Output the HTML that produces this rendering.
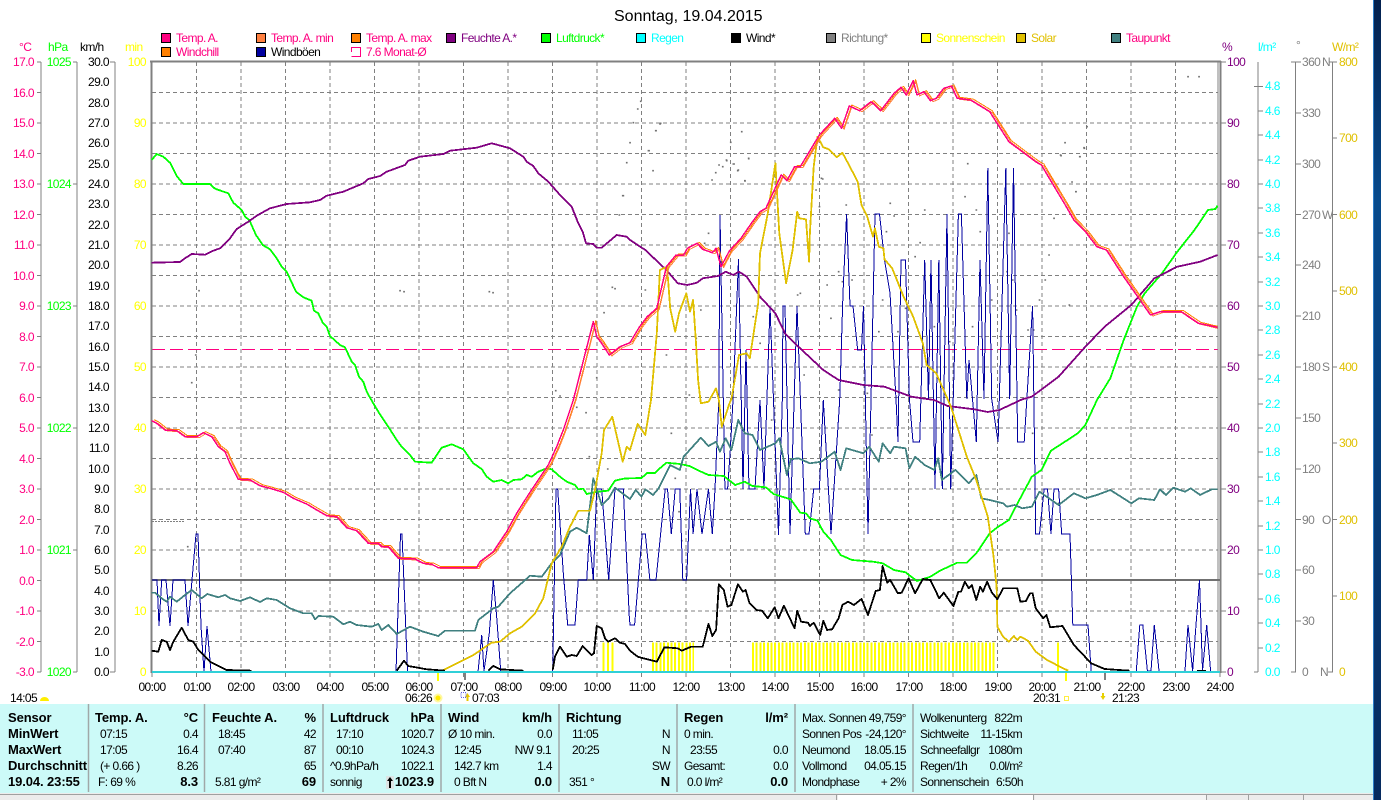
<!DOCTYPE html>
<html><head><meta charset="utf-8"><title>Sonntag, 19.04.2015</title>
<style>
html,body{margin:0;padding:0;background:#fff;overflow:hidden}
svg{display:block;position:absolute;left:0;top:0}
text{font-family:"Liberation Sans",sans-serif;font-size:12px;letter-spacing:-.6px}
.b text{font-size:13px;font-weight:bold;letter-spacing:-.1px}
</style></head><body>
<svg width="1381" height="800" viewBox="0 0 1381 800" xmlns="http://www.w3.org/2000/svg">
<defs>
<linearGradient id="dk" x1="0" y1="0" x2="0" y2="1"><stop offset="0" stop-color="#03204e"/><stop offset=".25" stop-color="#064a8c"/><stop offset=".6" stop-color="#053c78"/><stop offset="1" stop-color="#062a5e"/></linearGradient>
</defs>
<rect width="1381" height="800" fill="#fff"/>
<rect x="1373" y="0" width="8" height="800" fill="url(#dk)"/>
<rect x="1373" y="0" width="1" height="800" fill="#2a7cc8"/>
<text x="614" y="21" style="font-size:16px;letter-spacing:0" fill="#000">Sonntag, 19.04.2015</text>

<!-- legend -->
<g stroke="#000" stroke-width="1" shape-rendering="crispEdges">
<rect x="161.5" y="33.5" width="9" height="9" fill="#ff0080"/>
<rect x="256.5" y="33.5" width="9" height="9" fill="#ff8040"/>
<rect x="351.5" y="33.5" width="9" height="9" fill="#ff8000"/>
<rect x="446.5" y="33.5" width="9" height="9" fill="#800080"/>
<rect x="541.5" y="33.5" width="9" height="9" fill="#00ff00"/>
<rect x="636.5" y="33.5" width="9" height="9" fill="#00ffff"/>
<rect x="731.5" y="33.5" width="9" height="9" fill="#000"/>
<rect x="826.5" y="33.5" width="9" height="9" fill="#808080"/>
<rect x="921.5" y="33.5" width="9" height="9" fill="#ffff00"/>
<rect x="1016.5" y="33.5" width="9" height="9" fill="#e0c000"/>
<rect x="1111.5" y="33.5" width="9" height="9" fill="#408080"/>
<rect x="161.5" y="47.5" width="9" height="9" fill="#ff8000"/>
<rect x="256.5" y="47.5" width="9" height="9" fill="#0000a0"/>
</g>
<path d="M351.5 52V47.500H360.500V56.500H351.500" fill="none" stroke="#ff0080" shape-rendering="crispEdges"/>
<g fill="#ff0080">
<text x="176" y="42">Temp. A.</text><text x="271" y="42">Temp. A. min</text><text x="366" y="42">Temp. A. max</text>
<text x="176" y="56">Windchill</text><text x="366" y="56">7.6 Monat-Ø</text><text x="1126" y="42">Taupunkt</text>
</g>
<text x="271" y="56" fill="#000">Windböen</text>
<text x="461" y="42" fill="#800080">Feuchte A.*</text>
<text x="556" y="42" fill="#00ff00">Luftdruck*</text>
<text x="651" y="42" fill="#00ffff">Regen</text>
<text x="746" y="42" fill="#000">Wind*</text>
<text x="841" y="42" fill="#808080">Richtung*</text>
<text x="936" y="42" fill="#ffff00">Sonnenschein</text>
<text x="1031" y="42" fill="#e0c000">Solar</text>

<!-- axis headers -->
<text x="19" y="51" fill="#ff0080">°C</text>
<text x="48" y="51" fill="#00ff00">hPa</text>
<text x="80" y="51" fill="#000">km/h</text>
<text x="125" y="51" fill="#ffff00">min</text>
<text x="1222" y="51" fill="#800080">%</text>
<text x="1258" y="51" fill="#00ffff">l/m²</text>
<text x="1296" y="49" fill="#808080">°</text>
<text x="1332" y="51" fill="#e0c000">W/m²</text>

<!-- left axes -->
<path d="M41 62V672M77 62V672M115 62V672M37 62H41M37 92.500H41M37 123H41M37 153.500H41M37 184H41M37 214.500H41M37 245H41M37 275.500H41M37 306H41M37 336.500H41M37 367H41M37 397.500H41M37 428H41M37 458.500H41M37 489H41M37 519.500H41M37 550H41M37 580.500H41M37 611H41M37 641.500H41M37 672H41M73 62H77M73 184H77M73 306H77M73 428H77M73 550H77M73 672H77M110 62H115M110 672H115M1221 62H1226M1221 123H1226M1221 184H1226M1221 245H1226M1221 306H1226M1221 367H1226M1221 428H1226M1221 489H1226M1221 550H1226M1221 611H1226M1221 672H1226M1258 62V672M1295.500 62V672M1332.500 62V672M1254 86.400H1263M1258 111H1263M1258 135H1263M1258 160H1263M1258 184H1263M1258 208H1263M1258 233H1263M1258 257H1263M1258 282H1263M1258 306H1263M1258 330H1263M1258 355H1263M1258 379H1263M1258 404H1263M1258 428H1263M1258 452H1263M1258 477H1263M1258 501H1263M1258 526H1263M1258 550H1263M1258 574H1263M1258 599H1263M1258 623H1263M1258 648H1263M1254 672H1258M1291 62H1301M1296 113H1301M1296 164H1301M1296 214.500H1301M1296 265H1301M1296 316H1301M1296 367H1301M1296 418H1301M1296 469H1301M1296 519.500H1301M1296 570H1301M1296 621H1301M1291 672H1296M1329 62H1337M1333 138H1337M1333 214.500H1337M1333 291H1337M1333 367H1337M1333 443H1337M1333 519.500H1337M1333 596H1337M1328 672H1333" fill="none" stroke="#808080" shape-rendering="crispEdges"/>
<g fill="#ff0080" text-anchor="end">
<text x="34" y="66">17.0</text><text x="34" y="97">16.0</text><text x="34" y="127">15.0</text><text x="34" y="158">14.0</text><text x="34" y="188">13.0</text><text x="34" y="219">12.0</text><text x="34" y="249">11.0</text><text x="34" y="280">10.0</text><text x="34" y="310">9.0</text><text x="34" y="341">8.0</text><text x="34" y="371">7.0</text><text x="34" y="402">6.0</text><text x="34" y="432">5.0</text><text x="34" y="463">4.0</text><text x="34" y="493">3.0</text><text x="34" y="524">2.0</text><text x="34" y="554">1.0</text><text x="34" y="585">0.0</text><text x="34" y="615">-1.0</text><text x="34" y="646">-2.0</text><text x="34" y="676">-3.0</text>
</g>
<g fill="#00ff00" text-anchor="end">
<text x="71" y="66">1025</text><text x="71" y="188">1024</text><text x="71" y="310">1023</text><text x="71" y="432">1022</text><text x="71" y="554">1021</text><text x="71" y="676">1020</text>
</g>
<g fill="#000" text-anchor="end">
<text x="109" y="66">30.0</text><text x="109" y="86">29.0</text><text x="109" y="107">28.0</text><text x="109" y="127">27.0</text><text x="109" y="147">26.0</text><text x="109" y="168">25.0</text><text x="109" y="188">24.0</text><text x="109" y="208">23.0</text><text x="109" y="229">22.0</text><text x="109" y="249">21.0</text><text x="109" y="269">20.0</text><text x="109" y="290">19.0</text><text x="109" y="310">18.0</text><text x="109" y="330">17.0</text><text x="109" y="351">16.0</text><text x="109" y="371">15.0</text><text x="109" y="391">14.0</text><text x="109" y="412">13.0</text><text x="109" y="432">12.0</text><text x="109" y="452">11.0</text><text x="109" y="473">10.0</text><text x="109" y="493">9.0</text><text x="109" y="513">8.0</text><text x="109" y="534">7.0</text><text x="109" y="554">6.0</text><text x="109" y="574">5.0</text><text x="109" y="595">4.0</text><text x="109" y="615">3.0</text><text x="109" y="635">2.0</text><text x="109" y="656">1.0</text><text x="109" y="676">0.0</text>
</g>
<g fill="#ffff00" text-anchor="end">
<text x="146" y="66">100</text><text x="146" y="127">90</text><text x="146" y="188">80</text><text x="146" y="249">70</text><text x="146" y="310">60</text><text x="146" y="371">50</text><text x="146" y="432">40</text><text x="146" y="493">30</text><text x="146" y="554">20</text><text x="146" y="615">10</text><text x="146" y="676">0</text>
</g>
<g fill="#800080">
<text x="1227" y="66">100</text><text x="1227" y="127">90</text><text x="1227" y="188">80</text><text x="1227" y="249">70</text><text x="1227" y="310">60</text><text x="1227" y="371">50</text><text x="1227" y="432">40</text><text x="1227" y="493">30</text><text x="1227" y="554">20</text><text x="1227" y="615">10</text><text x="1227" y="676">0</text>
</g>
<g fill="#00ffff">
<text x="1265" y="90">4.8</text><text x="1265" y="115">4.6</text><text x="1265" y="139">4.4</text><text x="1265" y="164">4.2</text><text x="1265" y="188">4.0</text><text x="1265" y="212">3.8</text><text x="1265" y="237">3.6</text><text x="1265" y="261">3.4</text><text x="1265" y="286">3.2</text><text x="1265" y="310">3.0</text><text x="1265" y="334">2.8</text><text x="1265" y="359">2.6</text><text x="1265" y="383">2.4</text><text x="1265" y="408">2.2</text><text x="1265" y="432">2.0</text><text x="1265" y="456">1.8</text><text x="1265" y="481">1.6</text><text x="1265" y="505">1.4</text><text x="1265" y="530">1.2</text><text x="1265" y="554">1.0</text><text x="1265" y="578">0.8</text><text x="1265" y="603">0.6</text><text x="1265" y="627">0.4</text><text x="1265" y="652">0.2</text><text x="1265" y="676">0.0</text>
</g>
<g fill="#808080">
<text x="1302" y="66">360</text><text x="1322" y="66">N</text><text x="1302" y="117">330</text><text x="1302" y="168">300</text><text x="1302" y="219">270</text><text x="1322" y="219">W</text><text x="1302" y="269">240</text><text x="1302" y="320">210</text><text x="1302" y="371">180</text><text x="1322" y="371">S</text><text x="1302" y="422">150</text><text x="1302" y="473">120</text><text x="1302" y="524">90</text><text x="1322" y="524">O</text><text x="1302" y="574">60</text><text x="1302" y="625">30</text><text x="1302" y="676">0</text><text x="1320" y="676">N</text>
</g>
<g fill="#e0c000">
<text x="1339" y="66">800</text><text x="1339" y="142">700</text><text x="1339" y="219">600</text><text x="1339" y="295">500</text><text x="1339" y="371">400</text><text x="1339" y="447">300</text><text x="1339" y="524">200</text><text x="1339" y="600">100</text><text x="1339" y="676">0</text>
</g>

<!-- grid -->
<path d="M196.500 62V672M241 62V672M285.500 62V672M330 62V672M374.500 62V672M419 62V672M463.500 62V672M508 62V672M552.500 62V672M597 62V672M641.500 62V672M686 62V672M730.500 62V672M775 62V672M819.500 62V672M864 62V672M908.500 62V672M953 62V672M997.500 62V672M1042 62V672M1086.500 62V672M1131 62V672M1175.500 62V672M152 92.500H1218M152 123H1218M152 153.500H1218M152 184H1218M152 214.500H1218M152 245H1218M152 275.500H1218M152 306H1218M152 336.500H1218M152 367H1218M152 397.500H1218M152 428H1218M152 458.500H1218M152 489H1218M152 519.500H1218M152 550H1218M152 611H1218M152 641.500H1218" fill="none" stroke="#808080" stroke-dasharray="4 3" shape-rendering="crispEdges"/>
<path d="M152 349.500H1218" fill="none" stroke="#ff0080" stroke-dasharray="13 5" shape-rendering="crispEdges"/>
<path d="M152 521.500H185" fill="none" stroke="#808080" stroke-dasharray="2 1" shape-rendering="crispEdges"/>

<!-- direction dots -->
<path fill="none" stroke="#707070" stroke-width="1.600" stroke-linecap="square" d="M199 290.700h.1M195.700 355h.1M191.700 382.700h.1M400 290.700h.1M404 291.700h.1M489.300 291.700h.1M493 292.700h.1M555.700 390.700h.1M560 396h.1M626.700 162.700h.1M630 142.700h.1M623.300 195.700h.1M619.300 215h.1M612.300 287.300h.1M615 288.700h.1M604 312.700h.1M596.700 377.700h.1M187.700 546.700h.1M576.700 407.300h.1M586 412.700h.1M589.300 456.700h.1M607.700 469h.1M637.700 109h.1M640.700 101.300h.1M633.300 122.700h.1M660 124h.1M655.700 130.700h.1M649 150.700h.1M653 170.700h.1M622.700 195.700h.1M719 165h.1M722.700 166.700h.1M726.700 160.700h.1M715.700 172.700h.1M712 180h.1M734 164h.1M737.700 170.700h.1M745 181h.1M748.700 158.700h.1M741.700 131.700h.1M730.700 142.300h.1M822.700 179h.1M816 190h.1M967.700 163.700h.1M965 196.700h.1M1188 76.700h.1M1199 76.700h.1M1087 126.700h.1M1065 142.700h.1M1084 147.700h.1M1061 155.700h.1M1080 156.700h.1M1072 182h.1M1076 191.700h.1M976.300 210h.1M980.200 231.700h.1M920.100 242.700h.1M915.100 256.700h.1M924.700 210h.1M890.200 203.300h.1M894.100 216h.1M886.400 231.700h.1M846.200 205h.1M821.400 178.300h.1M819.400 206.700h.1M838.600 271.700h.1M842.400 281.700h.1M827.100 285h.1M852 280h.1M797.600 295h.1M800.300 293.300h.1M830.900 318.300h.1M882.600 300h.1M905.500 308.300h.1M878.800 331.700h.1M897.900 331.700h.1M934.300 326.700h.1M949.600 341.700h.1M972.500 326.700h.1M991.700 300h.1M1016.500 310h.1M1028 330h.1M1033.700 330h.1M1039.500 300h.1M1045.200 280h.1M1012.700 280h.1M1007 271.700h.1M1008.900 233.300h.1M1049 255h.1M1054 218.300h.1M1056.700 186.700h.1M1075.800 191.700h.1M1060.500 155h.1M1079.700 156.700h.1M1084.300 148.300h.1M1069.300 305h.1M838.600 390h.1M867.300 393.300h.1M804.100 375h.1M769.700 323.300h.1M760.100 343.300h.1M753.200 316.700h.1M666.400 355h.1M645.300 290h.1M700.800 310h.1M689.300 395h.1M696.200 338.300h.1M708.500 233.300h.1M704.600 243.300h.1M744.800 180.700h.1M738.300 170h.1M733.300 164h.1M726.400 160h.1M748.600 158.300h.1M653 170.700h.1M656 130.700h.1M660.600 123.300h.1M648.400 150.700h.1M671.300 433.300h.1M675.200 478.300h.1M679 511.700h.1M681.700 540.700h.1M693 525h.1M771.600 420h.1M871.900 435h.1M1032.600 433.300h.1M1058.600 503.300h.1"/>

<!-- sunshine bars -->
<g stroke="#ffff00" stroke-width="29.500" fill="none" shape-rendering="crispEdges">
<path d="M602.500 657H614" stroke-dasharray="2 2.500"/>
<path d="M652 657H694" stroke-dasharray="2 1.700"/>
<path d="M752 657H996" stroke-dasharray="2 1.700"/>
<path d="M1057 657H1059"/>
</g>

<!-- frame -->
<path d="M1218 62V672" fill="none" stroke="#808080" stroke-width="1" shape-rendering="crispEdges"/>
<path d="M150 61.500H1221M151.500 61V673M1220.500 61V673" fill="none" stroke="#808080" stroke-width="2" shape-rendering="crispEdges"/>
<path d="M152 580H1220" fill="none" stroke="#707070" stroke-width="2" shape-rendering="crispEdges"/>

<!-- gusts -->
<g fill="none" stroke="#0000a0" stroke-width="1" stroke-linejoin="miter" shape-rendering="crispEdges">
<polyline points="152,580 157,580 159,626 161.700,580 166,580 170,626 173,580 185,580 188,626 192,580 196,534 198,534 201,626 204,672 207,626 211,672"/>
<polyline points="396,672 400.500,534 402,534 406,633 407.500,671"/>
<polyline points="478,672 481.700,635 484,671 489.300,633 493.300,580 496.700,617 500.700,671"/>
<polyline points="552.700,671 556,489 557.700,489 563.300,573 567.700,625 575,625 578.300,580 586.700,580 589.300,535 593.300,580 596.700,489 601.700,489 608.700,580 615,489 623.300,489 629.300,617 630,625 634.600,625 638.400,580 642.200,534 645.300,534 649.900,580 656,580 660.600,534 665.200,489 667.500,489 671.300,534 675.200,489 679.800,489 682.800,580 686.600,580 690.500,489 693.100,534 697,489 702,534 708.500,489 712.300,534 715,489 718.800,400 720,215 724.900,489 727.600,489 730.300,450 733,400 738.500,259 743,489 746,350 749,489 755,489 760,400 764,489 770,306 778.500,535 782.300,400 783,306 785,306 790,534 797,306 805.300,534 809,534 813.700,489 819.400,489 823.300,400 831,534 839.700,400 843,293 846.600,214 850,306 853,306 857.700,350 861.500,350 863.500,306 868,534 871,400 875,214 879.500,214 884.500,260 890,293 896,399 898,442 901,260 905.500,260 909.400,399 913,442 919.700,442 924.700,260 928.500,399 931,260 935,489 938.800,260 942.300,489 947,214 950.700,489 958.400,214 961.400,214 966.800,399 969,360 972.500,399 976.300,442 980,260 984,399 987.800,168 991.700,399 998.100,442 1005.800,168 1009.700,399 1013.500,168 1017.700,442 1024.200,442 1032.600,306 1035.700,534 1039.500,534 1044.100,489 1047.500,489 1051,534 1054,489 1058.600,489 1061.700,534 1070,534 1072.800,625 1088,625 1091.200,671"/>
<polyline points="1136.300,671 1139.800,625 1142.800,625 1147.400,671 1151,671 1154.300,625 1159,671"/>
<polyline points="1185,671 1188,625 1192.600,671 1196,625 1199.500,580 1202.500,671 1206.700,625 1210.600,671"/>
</g>

<g fill="none" stroke-width="1.800" stroke-linejoin="round" shape-rendering="crispEdges">
<!-- Luftdruck -->
<polyline stroke="#00ff00" points="151.700,160 156.700,154 163.300,156.700 170,162.700 176.700,176 183.300,184 210,184 215,188.700 228.300,193.300 233.300,202.700 241.700,210 245,216.700 249.300,220 256,235 262.700,245 270,249.300 276.700,258.300 281.700,266.700 286.700,271.700 296,291.700 303.300,297.300 311.700,300.700 314,310.700 318.300,313.300 322.700,322.700 326.700,326.700 330,336 340,345 345,347.300 351.700,361.700 355,365 359,376.700 363.300,381.700 366.700,391.700 373.300,403.300 378.300,411.700 388.300,426.700 396.700,440 401.700,446.700 410,455 415,461.700 431.700,462.700 441.700,447.700 451.700,444.300 463.300,449.300 473.300,463.300 481.700,469 486.700,476.700 493.300,481.700 501.700,480 508.300,483.300 513.300,480 521.700,479.300 526.700,475 531.700,476.700 538.300,471.700 546.700,468.300 551.700,469.300 560,476.700 566.700,481.700 575,485 578.300,489.300 583.300,488.700 586.700,494 596.700,491.700 608.300,490.700 615,480.700 623.300,478.700 630,478.300 641.500,478 647.200,473 655,473 658.700,469.300 666.400,462.700 679.800,464 689.300,466 698.900,470.700 708.500,475 723.800,476 735.200,485 744.800,481.700 752.500,486 765.900,487.300 773.500,494 790.700,499.300 800.300,512.700 806,513.300 809.900,518.300 817.500,520.700 823.300,531.700 830.900,540 840.500,555 852,560 873,561.700 882.600,563.300 894,570 905.500,572.300 917,581 930.400,576.700 940,570.700 957.200,562.700 966.800,562.700 976.300,553.300 989.700,533.300 997.400,527.300 1008.900,520 1018.400,501.700 1031.800,476.700 1041.400,470 1051,450.700 1062.500,443.300 1077.800,433.300 1085.400,425 1097,400 1110.300,378.300 1123.700,340 1137,306.700 1144.700,293.300 1162,273.300 1177.300,251.700 1194.500,230 1207.900,210 1215.500,209 1217.500,205.700"/>
<!-- Taupunkt -->
<polyline stroke="#408080" points="151.700,592.700 155,592.700 161.700,598.300 166.700,601.700 170,596.700 176.700,601.700 185,595 191.700,590 201.700,598.300 207.300,594 218.300,597.300 225,595 230,598.300 240,601 250,597.300 260,602 266.700,598.300 276.700,600 290,608.300 303.300,613.300 311.700,613.300 315,619.300 318.300,616 333.300,616.700 343.300,624.300 350,621.700 356.700,625 371.700,626.700 378.300,624 381.700,630 388.300,625 396.700,634 410,626.700 423.300,631.700 438.300,636 445,630.700 475,630.700 478.300,620 493.300,608.300 498.300,606.700 510,593.300 523.300,581.700 530,575.700 541.700,576.700 551.700,563.300 560,555 570,531.700 576.700,527.700 586.700,533.300 593.300,478.300 601.700,505 608.300,499 615,487.700 630,499 635.700,490 641.500,496.700 645.300,489.300 653,495 658.700,488.300 670.200,465 679.800,470 683.600,456.700 700.800,437.700 708.500,446 716.100,441.700 719.900,451.700 725.700,438.300 731.400,450 738.300,420 744.800,433.300 752.500,435 760,450 775.400,443.300 779.300,438.300 786.900,475 790.700,459.300 798.400,458.300 809.900,463.300 821.400,461.700 834.700,451.700 840.500,470 846.200,448.300 863.400,453.300 869.200,446.700 878.800,461.700 882.600,443.300 890.200,453.300 894.100,446.700 905.500,448.300 909.400,468.300 915.100,456.700 924.700,465 934.300,470 938.100,458.300 941.900,480 955.300,470 968.700,483.300 976.300,475 981.300,498.300 989.700,500 1003.100,503.300 1007,506.700 1014.600,505 1022.300,508.300 1031.800,506.700 1039.500,491.700 1058.600,505 1073.900,493.300 1085.400,498.300 1096.900,495 1110.300,490 1131.300,503.300 1139,498.300 1154.300,500 1160,489.300 1165.800,495 1173.400,487.700 1185,491.700 1190.700,488.300 1200.200,495 1211.700,489.300 1217.500,489.300"/>
<!-- Feuchte -->
<polyline stroke="#800080" points="151.700,262.700 180,262 185,258.300 191.700,254 205,254.700 213.300,250.700 220,248.300 230,238.300 236.700,229 248.300,221.700 256.700,215.700 270,208.300 286.700,204 310,202.300 320,200 326.700,195.700 343.300,191.700 363.300,183.300 368.300,179 380,176 386.700,171.700 405,165 408.300,160.700 420,156.700 443.300,154 450,150.700 476.700,147.700 491.700,143.300 510,148.300 523.300,156.700 526.700,161.700 533.300,166 538.300,173.300 548.300,181.700 560,195 571.700,206.700 578.300,223.300 582.700,231.700 586,243.300 593.300,244 596.700,247.700 601.700,247.700 616.700,235 626.700,236.700 630,240 645.300,250 666.400,270 677.800,283.300 687.400,285 697,282.700 702.700,278.300 718,276 725.700,271.700 733.300,275 739,271.700 746.700,276.700 760,296.700 775.400,313.300 785,333.300 798.400,346.700 823.300,370 838.600,380 863.400,385 884.500,386.700 911.300,396.700 934,400 947.700,406 974.400,409.300 987.800,412 999.300,410 1022.300,399.300 1031.800,396.700 1058.600,376.700 1085.400,346.700 1104.600,326.700 1131.300,305 1154.300,278.300 1177.300,266.700 1200.200,261.700 1217.500,255"/>
<!-- Solar -->
<polyline stroke="#e0c000" points="443.300,670 463.300,660 473.300,655 483.300,648.300 491.700,642.700 500,641.700 510,633.300 521.700,626.700 535,613.300 543.300,598.300 551.700,563.300 561.700,546.700 570,526.700 578.300,510.700 590,510.700 595,490 601.700,453.300 604,430 612.300,416.700 622.700,461.700 626.700,446.700 630,450 637.700,424 645.300,435 651,400 656.800,333.300 659.900,270 667.100,266.700 670.200,308.300 675.200,331.700 679,313.300 686.300,293.300 690,311.700 693.100,300 695.800,340 698.100,380 700.800,403.300 708.500,401.700 716,388.300 718.800,399.300 721.800,426.700 729.500,403.300 731.400,399.300 739,355 746.700,353.300 749.800,358.300 758.200,303.300 760,253.300 767.800,213.300 775.400,163.300 779.300,233.300 786.100,283.300 792.600,250 797.200,211.700 799.200,218.300 806,219.300 809.100,261.700 809.900,233 813.700,166.700 817.500,136.700 823.300,147.300 829,149.300 836.700,157.300 842.400,152.700 848.100,163.300 857.700,181.700 861.500,205 867.300,216.700 873,236.700 874.900,228.300 878.800,246.700 883.400,248.300 884.500,259.300 892.200,268.300 903.600,296.700 913.200,316.700 922.800,343.300 926.600,365 936.200,373.300 947.700,399.300 951.500,408.300 966.800,456.700 976.300,480 987.800,516.700 993.600,556.700 996.600,586.700 997.400,626.700 1003.100,636.700 1008.900,641.700 1013.800,636 1017.300,640 1020.400,636.700 1028,640.700 1035.700,651.700 1047.100,660 1058.600,666 1068.200,670.700"/>
<!-- Wind -->
<g stroke="#000">
<polyline points="151.700,650.700 158.300,651.700 161.700,640 166.700,641.700 170,650 173.300,641.700 181.700,627.700 188.300,640 193.300,641.700 198.300,650 210,661.700 226.700,670 251.700,670.700"/>
<polyline points="396.700,670.700 404,660.700 408.300,666 426.700,669.300 445,670.700"/>
<polyline points="488.300,670.700 493.300,666 500,669.300 523.300,670.700"/>
<polyline points="552.700,670 555,656.700 560,646.700 566.700,656.700 571.700,655 576.700,656 582.700,646 591.700,655 594,653.300 596.700,626 601.700,628.300 605,638.300 608.300,641.700 615,638.300 620,642.700 625,644 630,650.700 637.700,656.700 643.400,658.300 656.800,661.700 664.400,647.300 677.800,648.300 681.700,650.700 691.200,646.700 702.700,646.700 708.500,624 712.300,636 716.100,630 718.800,584.300 723.800,590 727.600,606.700 731.400,605 737.900,584.300 742.900,591.700 745.600,590 749.400,602.700 756.300,610 762,610.700 767.800,618.300 774.700,607.300 778.500,618.300 783.900,605.700 794.600,628.300 797.200,610.700 801.100,621.700 808,622.700 809.900,626 813.700,622.700 820.200,635 823.300,620.700 827.100,630 832.100,629.300 838.600,618.300 842.400,605 848.100,601.700 853.900,605 861.500,599 868,615 875.700,591 879.900,590 882.600,566 887.200,582.700 890.200,580 897.900,593.300 901.700,592.700 908.600,578.300 915.100,593.300 922.800,579 930.400,580 939.200,598.300 943.800,592.700 953.400,606 958.400,591.700 961,591.700 964.900,581.700 968.700,588.300 971.800,585 976.300,600 980.200,586.700 982.900,591.700 987.100,581.700 991.700,592.300 997.400,599.300 1003.100,588.300 1017.300,588.300 1020.400,601.700 1026.100,601 1030,593.300 1032.600,593.300 1035.700,608.300 1043.300,618.300 1046.400,615 1050.200,627.300 1062.500,626 1073.900,645 1091.200,663.300 1104.600,669 1129.400,670.700"/>
<path d="M1197 671H1206"/>
</g>
</g>
<!-- Temperatures -->
<g fill="none" shape-rendering="crispEdges" stroke-linejoin="round">
<polyline stroke="#ff8000" stroke-width="1" transform="translate(2.5,-1)" points="151.700,420.700 156.700,423.300 165,430 176.700,430.700 185,436.700 196.700,436.700 203.300,432.700 211.700,436.700 218.300,446.700 225,451.700 230,463.300 238.300,479.300 250,480 260,485.700 270,488.300 283.300,492.300 293.300,498.300 306.700,504 316.700,510 326.700,515.700 336.700,516.700 346.700,527.700 356.700,530.700 368.300,543.300 378.300,543.300 381.700,546.700 388.300,546.700 398.300,558.300 415,559 423.300,563.300 431.700,564.300 438.300,567.700 476.700,567.700 480,561.700 493.300,551.700 506.700,531.700 516.700,513.300 525,500 538.300,480 548.300,465 556.700,446.700 563.300,430 573.300,400 593.300,321.700 596.700,336.700 601.700,343.300 609.300,355 620,346.700 630,342.700 639.600,326.700 647.200,316.700 656.800,308.300 666.400,266.700 676,255 683.600,255 687.400,248.300 697,243.300 702.700,249.300 712.300,252.700 716.100,248.300 721,266.700 729.500,250.700 741,238.300 752.500,221.700 760,211.700 765.900,208.300 773.500,191.700 781.200,175 786.900,180.700 794.600,166.700 800.300,166.700 819.400,135 834.700,118.300 841.600,128.300 849.300,106 859.600,110.700 871.100,101.700 880.700,110.700 894.100,93.300 901,87.300 906.300,95 913.200,80.700 917,95 923.900,91.700 930.400,100.700 936.200,98.300 943.800,88.300 951.500,86 957.200,98.300 970.600,100 989.700,111.700 1008.900,141.700 1035.700,161.700 1041.400,165 1066.300,206.700 1073.900,220 1085.400,231.700 1096.900,246.700 1106.500,250 1123.700,276.700 1150.500,315 1160,311.700 1181.100,311.700 1198.300,323.300 1215,327.300"/>
<polyline stroke="#ff8040" stroke-width="1" transform="translate(2.5,1)" points="151.700,420.700 156.700,423.300 165,430 176.700,430.700 185,436.700 196.700,436.700 203.300,432.700 211.700,436.700 218.300,446.700 225,451.700 230,463.300 238.300,479.300 250,480 260,485.700 270,488.300 283.300,492.300 293.300,498.300 306.700,504 316.700,510 326.700,515.700 336.700,516.700 346.700,527.700 356.700,530.700 368.300,543.300 378.300,543.300 381.700,546.700 388.300,546.700 398.300,558.300 415,559 423.300,563.300 431.700,564.300 438.300,567.700 476.700,567.700 480,561.700 493.300,551.700 506.700,531.700 516.700,513.300 525,500 538.300,480 548.300,465 556.700,446.700 563.300,430 573.300,400 593.300,321.700 596.700,336.700 601.700,343.300 609.300,355 620,346.700 630,342.700 639.600,326.700 647.200,316.700 656.800,308.300 666.400,266.700 676,255 683.600,255 687.400,248.300 697,243.300 702.700,249.300 712.300,252.700 716.100,248.300 721,266.700 729.500,250.700 741,238.300 752.500,221.700 760,211.700 765.900,208.300 773.500,191.700 781.200,175 786.900,180.700 794.600,166.700 800.300,166.700 819.400,135 834.700,118.300 841.600,128.300 849.300,106 859.600,110.700 871.100,101.700 880.700,110.700 894.100,93.300 901,87.300 906.300,95 913.200,80.700 917,95 923.900,91.700 930.400,100.700 936.200,98.300 943.800,88.300 951.500,86 957.200,98.300 970.600,100 989.700,111.700 1008.900,141.700 1035.700,161.700 1041.400,165 1066.300,206.700 1073.900,220 1085.400,231.700 1096.900,246.700 1106.500,250 1123.700,276.700 1150.500,315 1160,311.700 1181.100,311.700 1198.300,323.300 1215,327.300"/>
<polyline stroke="#ff0080" stroke-width="1.500" points="151.700,420.700 156.700,423.300 165,430 176.700,430.700 185,436.700 196.700,436.700 203.300,432.700 211.700,436.700 218.300,446.700 225,451.700 230,463.300 238.300,479.300 250,480 260,485.700 270,488.300 283.300,492.300 293.300,498.300 306.700,504 316.700,510 326.700,515.700 336.700,516.700 346.700,527.700 356.700,530.700 368.300,543.300 378.300,543.300 381.700,546.700 388.300,546.700 398.300,558.300 415,559 423.300,563.300 431.700,564.300 438.300,567.700 476.700,567.700 480,561.700 493.300,551.700 506.700,531.700 516.700,513.300 525,500 538.300,480 548.300,465 556.700,446.700 563.300,430 573.300,400 593.300,321.700 596.700,336.700 601.700,343.300 609.300,355 620,346.700 630,342.700 639.600,326.700 647.200,316.700 656.800,308.300 666.400,266.700 676,255 683.600,255 687.400,248.300 697,243.300 702.700,249.300 712.300,252.700 716.100,248.300 721,266.700 729.500,250.700 741,238.300 752.500,221.700 760,211.700 765.900,208.300 773.500,191.700 781.200,175 786.900,180.700 794.600,166.700 800.300,166.700 819.400,135 834.700,118.300 841.600,128.300 849.300,106 859.600,110.700 871.100,101.700 880.700,110.700 894.100,93.300 901,87.300 906.300,95 913.200,80.700 917,95 923.900,91.700 930.400,100.700 936.200,98.300 943.800,88.300 951.500,86 957.200,98.300 970.600,100 989.700,111.700 1008.900,141.700 1035.700,161.700 1041.400,165 1066.300,206.700 1073.900,220 1085.400,231.700 1096.900,246.700 1106.500,250 1123.700,276.700 1150.500,315 1160,311.700 1181.100,311.700 1198.300,323.300 1217.500,327.300"/>
</g>
<rect x="152" y="671" width="1068" height="2" fill="#30d0d8"/>

<!-- x axis -->
<path d="M152 673V677M196.500 673V677M241 673V677M285.500 673V677M330 673V677M374.500 673V677M419 673V677M463.500 673V677M508 673V677M552.500 673V677M597 673V677M641.500 673V677M686 673V677M730.500 673V677M775 673V677M819.500 673V677M864 673V677M908.500 673V677M953 673V677M997.500 673V677M1042 673V677M1086.500 673V677M1131 673V677M1175.500 673V677M1220 673V677" fill="none" stroke="#808080" shape-rendering="crispEdges"/>
<path d="M465 673V680M1105 673V680" fill="none" stroke="#808080" stroke-width="2" shape-rendering="crispEdges"/>
<path d="M438 673V681M1066 673V681" fill="none" stroke="#ffff00" stroke-width="2" shape-rendering="crispEdges"/>
<g fill="#000" text-anchor="middle">
<text x="152" y="691">00:00</text><text x="197" y="691">01:00</text><text x="241" y="691">02:00</text><text x="286" y="691">03:00</text><text x="330" y="691">04:00</text><text x="375" y="691">05:00</text><text x="419" y="691">06:00</text><text x="464" y="691">07:00</text><text x="508" y="691">08:00</text><text x="553" y="691">09:00</text><text x="597" y="691">10:00</text><text x="642" y="691">11:00</text><text x="686" y="691">12:00</text><text x="731" y="691">13:00</text><text x="775" y="691">14:00</text><text x="820" y="691">15:00</text><text x="864" y="691">16:00</text><text x="909" y="691">17:00</text><text x="953" y="691">18:00</text><text x="998" y="691">19:00</text><text x="1042" y="691">20:00</text><text x="1087" y="691">21:00</text><text x="1131" y="691">22:00</text><text x="1176" y="691">23:00</text><text x="1220" y="691">24:00</text>
</g>
<g fill="#000">
<text x="10" y="702">14:05</text><text x="405" y="702">06:26</text><text x="472" y="702">07:03</text><text x="1033" y="702">20:31</text><text x="1112" y="702">21:23</text>
</g>
<path d="M40 701a4.500 4 0 0 1 9 0z" fill="#ffee00"/>
<circle cx="438" cy="698" r="3.500" fill="#ffe800" stroke="#fff8a0" stroke-width="2"/>
<path d="M467.500 693l-2.500 4h1.500v4h2v-4h1.500z" fill="#e8c800"/>
<rect x="461" y="692.500" width="5" height="5" fill="none" stroke="#6060e0" stroke-dasharray="1 1"/>
<rect x="1064.500" y="696.500" width="4" height="4" fill="none" stroke="#ffee40"/>
<path d="M1103 700l-2.500-4h1.500v-3h2v3h1.500z" fill="#e8d000"/>

<!-- info panel -->
<rect x="0" y="704" width="1373" height="89" fill="#ccfaf8"/>
<path d="M88.500 704V792M204.500 704V792M323 704V792M441 704V792M559 704V792M677 704V792M795 704V792M913 704V792" fill="none" stroke="#a0a8a8" stroke-width="1.500"/>
<rect x="0" y="793" width="1373" height="7" fill="#ececec"/>
<rect x="0" y="794" width="1373" height="1" fill="#a0a0a0"/>
<path d="M836.500 795V800M1033.500 795V800M1206.500 795V800M1248.500 795V800M1303.500 795V800" stroke="#a0a0a0" fill="none"/>
<rect x="838" y="795" width="195" height="5" fill="#fff"/>
<rect x="1035" y="795" width="171" height="5" fill="#f4f4f4"/>

<g fill="#000">
<g class="b">
<text x="8" y="722">Sensor</text><text x="8" y="738">MinWert</text><text x="8" y="754">MaxWert</text><text x="8" y="770">Durchschnitt</text><text x="8" y="786">19.04. 23:55</text>
<text x="95" y="722">Temp. A.</text><text x="198" y="722" text-anchor="end">°C</text><text x="198" y="786" text-anchor="end">8.3</text>
<text x="212" y="722">Feuchte A.</text><text x="316" y="722" text-anchor="end">%</text><text x="316" y="786" text-anchor="end">69</text>
<text x="330" y="722">Luftdruck</text><text x="434" y="722" text-anchor="end">hPa</text><text x="434" y="786" text-anchor="end">1023.9</text>
<text x="448" y="722">Wind</text><text x="552" y="722" text-anchor="end">km/h</text><text x="552" y="786" text-anchor="end">0.0</text>
<text x="566" y="722">Richtung</text><text x="670" y="786" text-anchor="end">N</text>
<text x="684" y="722">Regen</text><text x="788" y="722" text-anchor="end">l/m²</text><text x="788" y="786" text-anchor="end">0.0</text>
</g>
<text x="100" y="738">07:15</text><text x="198" y="738" text-anchor="end">0.4</text>
<text x="100" y="754">17:05</text><text x="198" y="754" text-anchor="end">16.4</text>
<text x="100" y="770">(+ 0.66 )</text><text x="198" y="770" text-anchor="end">8.26</text>
<text x="98" y="786">F: 69 %</text>
<text x="218" y="738">18:45</text><text x="316" y="738" text-anchor="end">42</text>
<text x="218" y="754">07:40</text><text x="316" y="754" text-anchor="end">87</text>
<text x="316" y="770" text-anchor="end">65</text>
<text x="215" y="786">5.81 g/m²</text>
<text x="336" y="738">17:10</text><text x="434" y="738" text-anchor="end">1020.7</text>
<text x="336" y="754">00:10</text><text x="434" y="754" text-anchor="end">1024.3</text>
<text x="330" y="770">^0.9hPa/h</text><text x="434" y="770" text-anchor="end">1022.1</text>
<text x="330" y="786">sonnig</text>
<text x="448" y="738">Ø 10 min.</text><text x="552" y="738" text-anchor="end">0.0</text>
<text x="454" y="754">12:45</text><text x="551" y="754" text-anchor="end">NW 9.1</text>
<text x="454" y="770">142.7 km</text><text x="552" y="770" text-anchor="end">1.4</text>
<text x="454" y="786">0 Bft N</text>
<text x="572" y="738">11:05</text><text x="670" y="738" text-anchor="end">N</text>
<text x="572" y="754">20:25</text><text x="670" y="754" text-anchor="end">N</text>
<text x="670" y="770" text-anchor="end">SW</text>
<text x="569" y="786">351 °</text>
<text x="684" y="738">0 min.</text>
<text x="690" y="754">23:55</text><text x="788" y="754" text-anchor="end">0.0</text>
<text x="684" y="770">Gesamt:</text><text x="788" y="770" text-anchor="end">0.0</text>
<text x="687" y="786">0.0 l/m²</text>
<text x="802" y="722">Max. Sonnen</text><text x="906" y="722" text-anchor="end">49,759°</text>
<text x="802" y="738">Sonnen Pos</text><text x="906" y="738" text-anchor="end">-24,120°</text>
<text x="802" y="754">Neumond</text><text x="906" y="754" text-anchor="end">18.05.15</text>
<text x="802" y="770">Vollmond</text><text x="906" y="770" text-anchor="end">04.05.15</text>
<text x="802" y="786">Mondphase</text><text x="906" y="786" text-anchor="end">+ 2%</text>
<text x="920" y="722">Wolkenunterg</text><text x="1022" y="722" text-anchor="end">822m</text>
<text x="920" y="738">Sichtweite</text><text x="1022" y="738" text-anchor="end">11-15km</text>
<text x="920" y="754">Schneefallgr</text><text x="1022" y="754" text-anchor="end">1080m</text>
<text x="920" y="770">Regen/1h</text><text x="1022" y="770" text-anchor="end">0.0l/m²</text>
<text x="920" y="786">Sonnenschein</text><text x="1023" y="786" text-anchor="end">6:50h</text>
</g>
<rect x="386" y="776" width="8" height="13" fill="#dde4e4"/>
<path d="M390 777l-3 4h2v7h2v-7h2z" fill="#000"/>
</svg>
</body></html>
